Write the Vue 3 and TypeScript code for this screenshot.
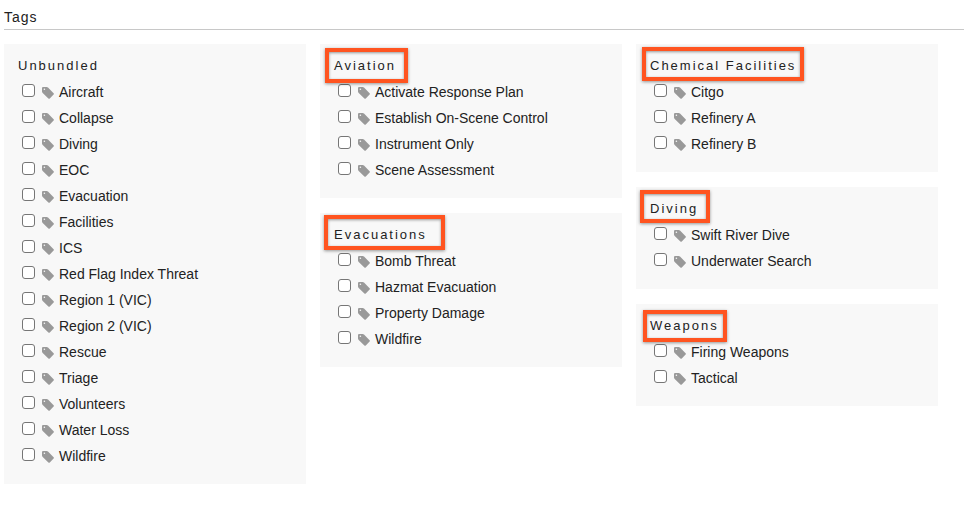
<script setup lang="ts">
interface Highlight {
  left: number
  top: number
  width: number
  height: number
}

interface Bundle {
  name: string
  tags: string[]
  highlight?: Highlight
}

const columns: Bundle[][] = [
  [
    {
      name: 'Unbundled',
      tags: [
        'Aircraft',
        'Collapse',
        'Diving',
        'EOC',
        'Evacuation',
        'Facilities',
        'ICS',
        'Red Flag Index Threat',
        'Region 1 (VIC)',
        'Region 2 (VIC)',
        'Rescue',
        'Triage',
        'Volunteers',
        'Water Loss',
        'Wildfire',
      ],
    },
  ],
  [
    {
      name: 'Aviation',
      tags: ['Activate Response Plan', 'Establish On-Scene Control', 'Instrument Only', 'Scene Assessment'],
      highlight: { left: 5, top: 4, width: 83, height: 35 },
    },
    {
      name: 'Evacuations',
      tags: ['Bomb Threat', 'Hazmat Evacuation', 'Property Damage', 'Wildfire'],
      highlight: { left: 4, top: 2, width: 121, height: 35 },
    },
  ],
  [
    {
      name: 'Chemical Facilities',
      tags: ['Citgo', 'Refinery A', 'Refinery B'],
      highlight: { left: 6, top: 3, width: 162, height: 34 },
    },
    {
      name: 'Diving',
      tags: ['Swift River Dive', 'Underwater Search'],
      highlight: { left: 4, top: 3, width: 70, height: 33 },
    },
    {
      name: 'Weapons',
      tags: ['Firing Weapons', 'Tactical'],
      highlight: { left: 7, top: 6, width: 84, height: 32 },
    },
  ],
]

function boxStyle(box: Highlight) {
  return {
    left: `${box.left}px`,
    top: `${box.top}px`,
    width: `${box.width}px`,
    height: `${box.height}px`,
  }
}

function fieldId(bundle: string, tag: string): string {
  return `${bundle}-${tag}`.toLowerCase().replace(/[^a-z0-9]+/g, '-')
}
</script>

<template>
  <main class="page">
    <h1 class="heading">Tags</h1>
    <div class="columns">
      <div v-for="(bundles, index) in columns" :key="index" class="column">
        <section v-for="bundle in bundles" :key="bundle.name" class="card">
          <h2 class="title">{{ bundle.name }}</h2>
          <ul class="tags">
            <li v-for="tag in bundle.tags" :key="tag" class="row">
              <input :id="fieldId(bundle.name, tag)" class="check" type="checkbox" />
              <label class="label" :for="fieldId(bundle.name, tag)">
                <svg class="icon" viewBox="0 0 12 12" aria-hidden="true">
                  <path
                    fill-rule="evenodd"
                    d="M0 1.1Q0 0 1.1 0H4.6Q5.4 0 6 .6L11.6 6.2Q12.2 6.9 11.6 7.5L7.8 11.5Q7.1 12.1 6.4 11.5L.7 5.9Q0 5.2 0 4.5ZM2.4 1.5A.8 .8 0 1 0 2.4 3.1A.8 .8 0 1 0 2.4 1.5Z"
                  />
                </svg>
                <span>{{ tag }}</span>
              </label>
            </li>
          </ul>
          <div v-if="bundle.highlight" class="highlight" :style="boxStyle(bundle.highlight)"></div>
        </section>
      </div>
    </div>
  </main>
</template>

<style>
body {
  background: #fff;
}
</style>

<style scoped>
.page {
  padding: 5px 0 16px 4px;
  color: #222;
  font-family: "Liberation Sans", Arial, sans-serif;
}

.heading {
  margin: 0;
  border-bottom: 1px solid #c8c8c8;
  font-size: 14px;
  font-weight: 400;
  line-height: 24px;
  letter-spacing: 1px;
}

.columns {
  display: grid;
  grid-template-columns: repeat(3, 1fr);
  gap: 14px;
  align-items: start;
  padding: 14px 26px 0 0;
}

.column {
  display: flex;
  flex-direction: column;
  gap: 15px;
}

.card {
  position: relative;
  padding: 8px 14px 15px;
  background: #f8f8f8;
}

.title {
  margin: 0;
  font-size: 13px;
  font-weight: 400;
  line-height: 27px;
  letter-spacing: 2px;
}

.tags {
  margin: 0;
  padding: 0 0 0 4px;
  list-style: none;
}

.row {
  display: flex;
  align-items: flex-start;
  gap: 7px;
  height: 26px;
}

.check {
  appearance: none;
  flex: none;
  box-sizing: border-box;
  width: 13px;
  height: 13px;
  margin: 5px 0 0;
  border: 1px solid #767676;
  border-radius: 3px;
  background: #fff;
}

.check:checked {
  border-color: #0075ff;
  background: #0075ff;
}

.label {
  display: flex;
  align-items: center;
  gap: 5px;
  font-size: 14px;
  line-height: 26px;
}

.icon {
  flex: none;
  width: 12px;
  height: 12px;
  margin-top: 2px;
  fill: #999;
}

.highlight {
  position: absolute;
  box-sizing: border-box;
  border: 4px solid #ff5420;
  box-shadow:
    0 1px 3px rgba(0, 0, 0, 0.4),
    inset 0 1px 3px rgba(0, 0, 0, 0.4);
  pointer-events: none;
}
</style>
